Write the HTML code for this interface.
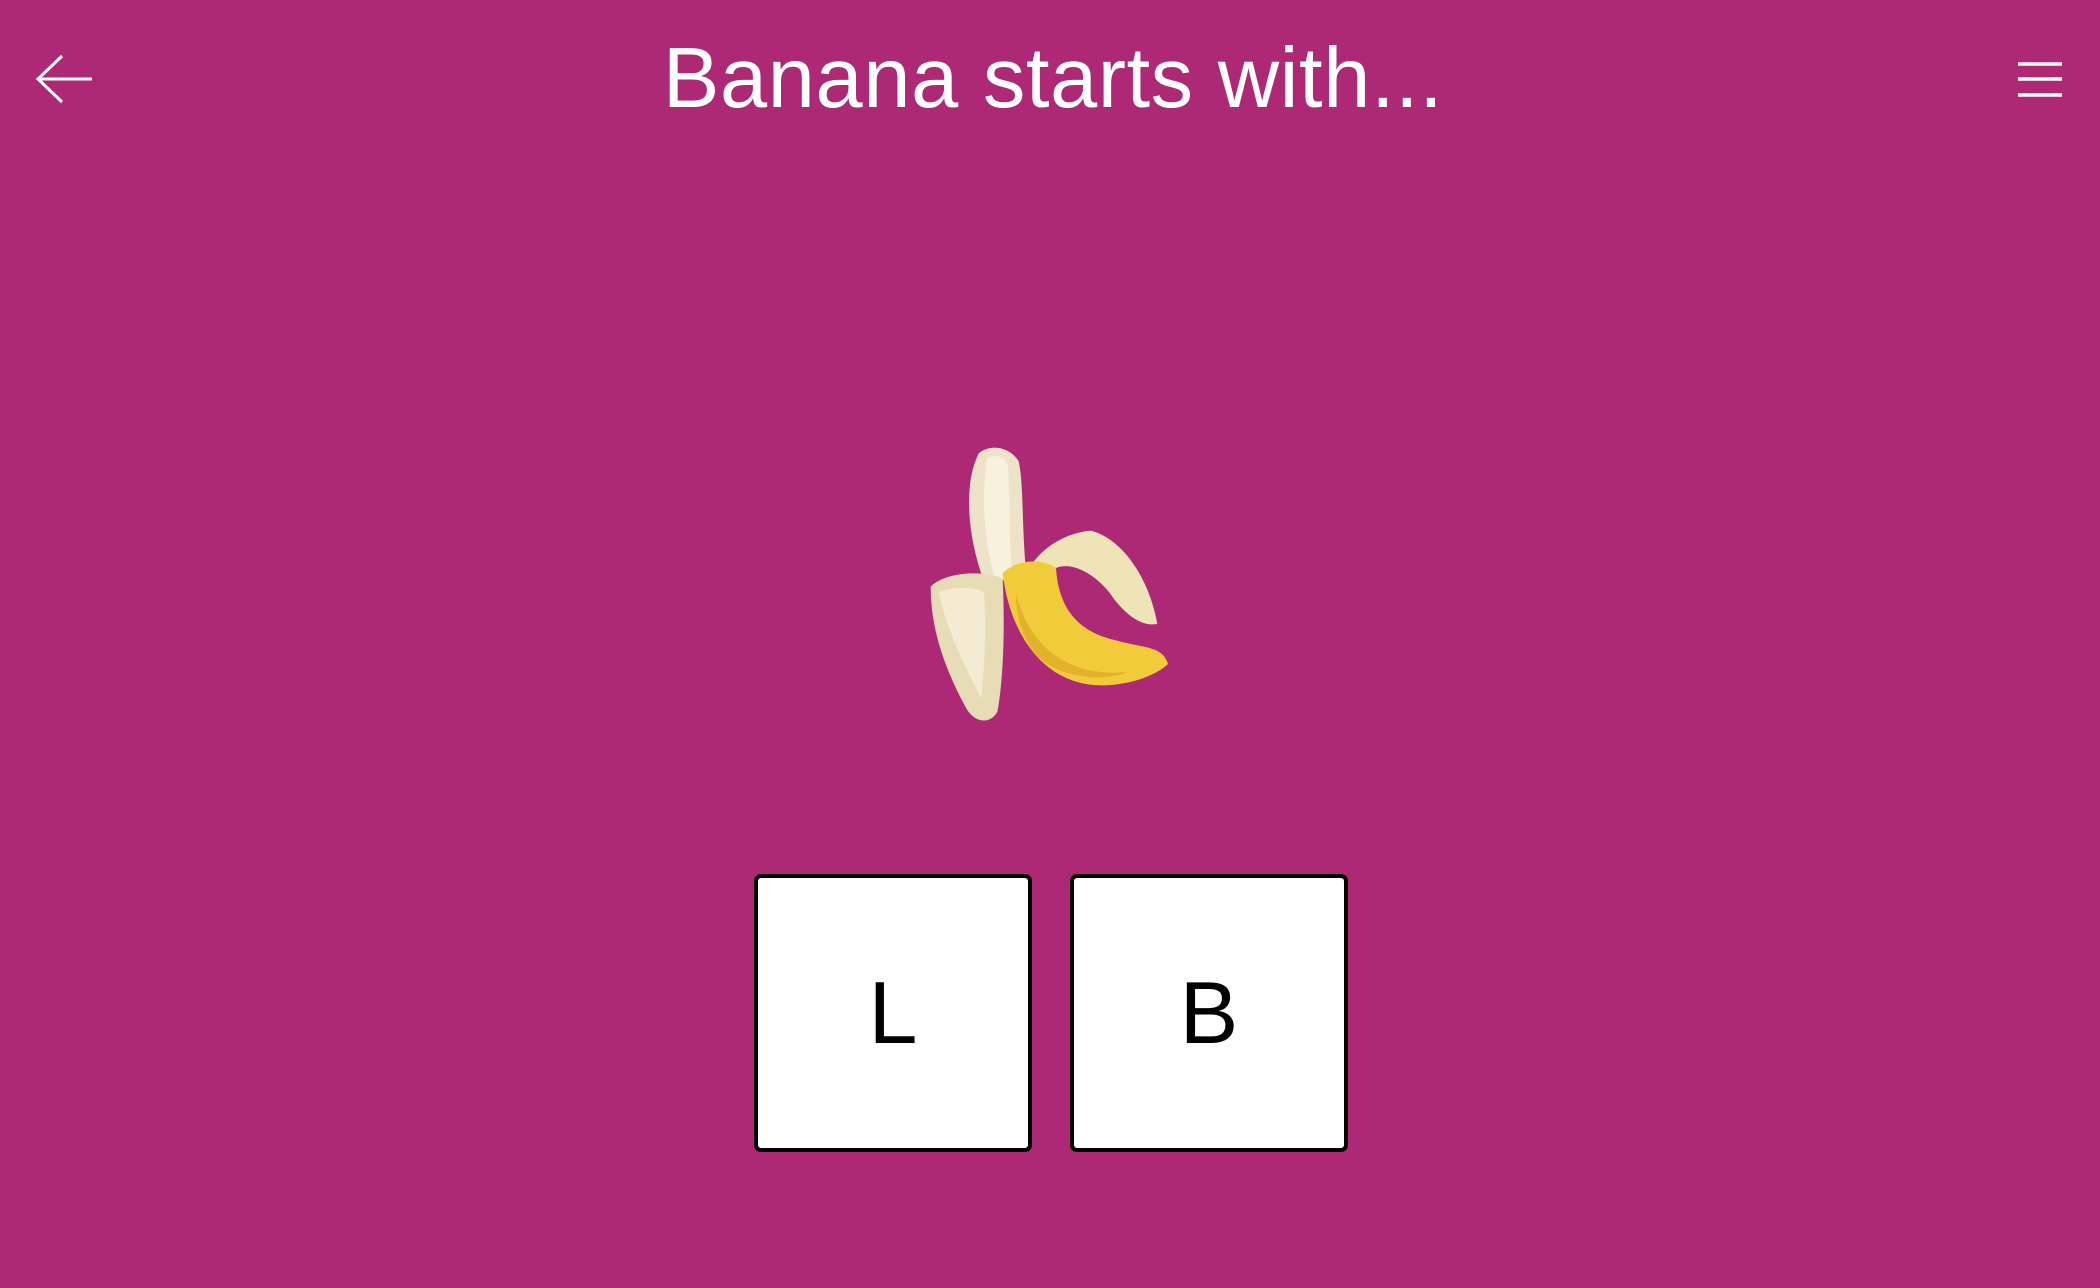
<!DOCTYPE html>
<html><head><meta charset="utf-8"><style>
html,body{margin:0;padding:0}
body{width:2100px;height:1288px;background:#ad2875;position:relative;overflow:hidden;font-family:"Liberation Sans",sans-serif}
.title{position:absolute;left:0;width:2106px;top:30px;text-align:center;color:#fff;font-size:85px;letter-spacing:0.5px}
.box{position:absolute;top:874px;width:270px;height:270px;background:#fff;border:4px solid #000;border-radius:7px;display:flex;align-items:center;justify-content:center;font-size:88px;color:#000}
</style></head><body>
<svg style="position:absolute;left:34px;top:54px" width="62" height="50" viewBox="0 0 62 50"><path d="M4 25H58M28 2L4 25L28 48" stroke="#fff" stroke-width="3" fill="none"/></svg>
<svg style="position:absolute;left:2016px;top:60px" width="48" height="40" viewBox="0 0 48 40"><path d="M2 4H46M2 19H46M2 35H46" stroke="#fff" stroke-width="3.5"/></svg>
<div class="title">Banana starts with...</div>
<svg style="position:absolute;left:928px;top:445px" width="240" height="278" viewBox="0 0 180 208">
<path d="M38 6C48 -2 62 2 68 12C72 30 70 60 74 100L42 102C30 70 26 30 38 6Z" fill="#ece3c8"/>
<path d="M44 10C50 6 58 8 60 16C62 40 60 70 64 100L50 100C42 70 40 40 44 10Z" fill="#f7f1de"/>
<path d="M72 100C80 80 100 66 122 64C146 70 166 100 172 134C160 136 150 128 140 116C130 100 110 86 96 92Z" fill="#efe3b8"/>
<path d="M56 96C62 146 90 180 130 180C152 180 172 172 180 164C176 150 160 152 140 146C114 140 98 124 96 92C84 84 66 86 56 96Z" fill="#f2cb3a"/>
<path d="M66 112C78 156 110 174 150 170C130 178 100 174 84 160C72 148 66 130 66 112Z" fill="#e3b22c"/>
<path d="M2 106C14 94 44 94 56 100C58 140 56 180 52 200C46 210 34 208 28 196C14 170 2 140 2 106Z" fill="#e8dcb6"/>
<path d="M8 110C18 106 34 106 42 110C44 140 42 170 40 190C30 170 14 140 8 110Z" fill="#f4ecd2"/>
</svg>
<div class="box" style="left:754px">L</div>
<div class="box" style="left:1070px">B</div>
</body></html>
